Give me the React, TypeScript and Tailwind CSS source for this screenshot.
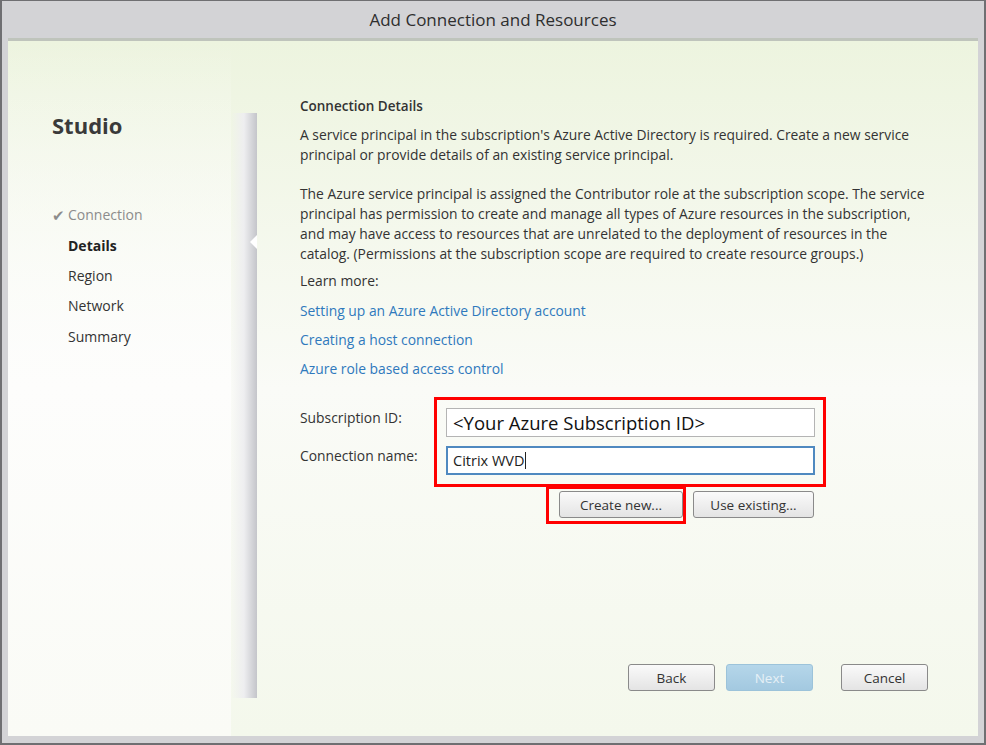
import React from "react";

const font = { fontFamily: '"Open Sans", "Noto Sans", sans-serif' };

function Btn({ children, w, disabled }: { children: React.ReactNode; w: string; disabled?: boolean }) {
  return (
    <div
      className={`${w} h-[27px] flex items-center justify-center rounded-[3px] border text-[13.5px] ${
        disabled
          ? "border-[#9cc3da] bg-gradient-to-b from-[#b5d6ea] to-[#a3c9e0] text-[#e6f0f6]"
          : "border-[#8a8a8a] bg-gradient-to-b from-[#fafafa] to-[#e4e4e4] text-[#333]"
      }`}
    >
      {children}
    </div>
  );
}

export default function App() {
  return (
    <div
      className="w-[986px] h-[745px] bg-[#d3d3d6] border-[2px] border-[#6f6f72] border-t-[1px] flex flex-col overflow-hidden"
      style={font}
    >
      <div className="h-[37px] flex items-center justify-center text-[17px] text-[#2e2e2e] shrink-0">
        Add Connection and Resources
      </div>
      <div className="mx-[6px] mb-[7px] flex-1 flex border-t-[3px] border-[#bfc4bc] bg-gradient-to-b from-[#edf4df] via-[#fafbf7] to-[#f4f8ec]">
        {/* Sidebar */}
        <div className="w-[249px] shrink-0 flex">
          <div className="flex-1 flex flex-col pl-[44px] pt-[69px] bg-gradient-to-b from-transparent via-[#fdfdfc] to-[#fafbf6]">
            <div className="text-[22px] font-bold text-[#3a3a3a] leading-[30px]">Studio</div>
            <div className="mt-[65px] flex flex-col text-[14px] leading-[20px]">
              <div className="flex items-center text-[#8c8c8c] h-[20px]">
                <span className="w-[16px] text-[15px] text-[#8c8c8c] leading-[20px]">✔</span>
                <span>Connection</span>
              </div>
              <div className="mt-[11px] pl-[16px] font-bold text-[#222]">Details</div>
              <div className="mt-[10px] pl-[16px] text-[#333]">Region</div>
              <div className="mt-[10px] pl-[16px] text-[#333]">Network</div>
              <div className="mt-[11px] pl-[16px] text-[#333]">Summary</div>
            </div>
          </div>
          <div className="relative w-[26px] mt-[72px] mb-[38px] bg-gradient-to-r from-transparent via-[#eeeef0] to-[#c4c5ca]">
            <div className="absolute right-0 top-[122px] w-0 h-0 border-y-[7px] border-y-transparent border-r-[7px] border-r-white" />
          </div>
        </div>
        {/* Main */}
        <div className="flex-1 flex flex-col pl-[43px] pt-[55px] text-[13.85px] text-[#333] leading-[20px]">
          <div className="font-semibold text-[13.5px]">Connection Details</div>
          <div className="mt-[9px] whitespace-nowrap">
            A service principal in the subscription's Azure Active Directory is required. Create a new service
            <br />
            principal or provide details of an existing service principal.
          </div>
          <div className="mt-[19px] whitespace-nowrap">
            The Azure service principal is assigned the Contributor role at the subscription scope. The service
            <br />
            principal has permission to create and manage all types of Azure resources in the subscription,
            <br />
            and may have access to resources that are unrelated to the deployment of resources in the
            <br />
            catalog. (Permissions at the subscription scope are required to create resource groups.)
          </div>
          <div className="mt-[7px]">Learn more:</div>
          <div className="mt-[10px] flex flex-col gap-[9px] text-[#2f79bd]">
            <div>Setting up an Azure Active Directory account</div>
            <div>Creating a host connection</div>
            <div>Azure role based access control</div>
          </div>

          <div className="relative mt-[29px] w-[530px]">
            <div className="flex items-start h-[29px]">
              <div className="w-[146px] leading-[20px]">Subscription ID:</div>
              <div className="w-[369px] h-[29px] border border-[#b4b4b4] bg-white flex items-center pl-[6px] text-[18.5px] text-[#111]">
                &lt;Your Azure Subscription ID&gt;
              </div>
            </div>
            <div className="flex items-start h-[29px] mt-[9px]">
              <div className="w-[146px] leading-[20px]">Connection name:</div>
              <div className="w-[369px] h-[29px] border-[2px] border-[#4f89c0] bg-white flex items-center pl-[5px] text-[14.5px] text-[#222]">
                Citrix WVD<span className="inline-block w-[1px] h-[17px] bg-[#222] ml-[1px]" />
              </div>
            </div>
            <div className="flex justify-end gap-[10px] mt-[16px] pr-[1px] w-[515px]">
              <Btn w="w-[124px]">Create new...</Btn>
              <Btn w="w-[121px]">Use existing...</Btn>
            </div>
            <div className="absolute left-[134px] top-[-11px] w-[392px] h-[90px] border-[3px] border-[#ff0000] pointer-events-none" />
            <div className="absolute left-[246px] top-[78px] w-[140px] h-[38px] border-[3px] border-[#ff0000] pointer-events-none" />
          </div>

          <div className="mt-auto mb-[45px] flex pr-[50px] justify-end">
            <Btn w="w-[87px]">Back</Btn>
            <div className="w-[11px]" />
            <Btn w="w-[87px]" disabled>Next</Btn>
            <div className="w-[28px]" />
            <Btn w="w-[87px]">Cancel</Btn>
          </div>
        </div>
      </div>
    </div>
  );
}
